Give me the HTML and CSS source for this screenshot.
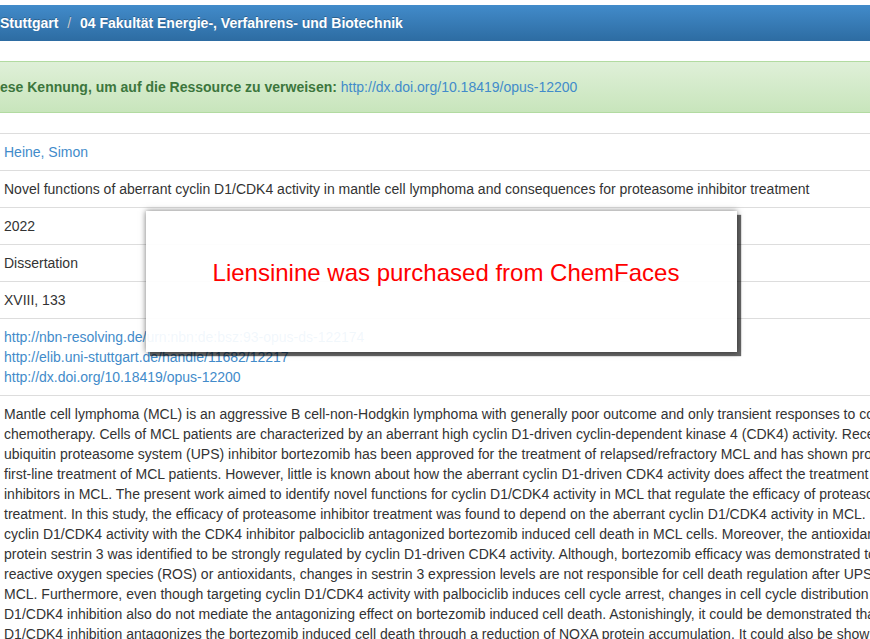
FILE: index.html
```html
<!DOCTYPE html>
<html lang="de">
<head>
    <meta charset="UTF-8">
    <meta name="viewport" content="width=device-width, initial-scale=1.0">
    <title>Novel functions of aberrant cyclin D1/CDK4 activity</title>
    <link rel="stylesheet" href="styles.css">
</head>
<body>

<ol class="breadcrumb">
    <li>Stuttgart</li>
    <li>04 Fakultät Energie-, Verfahrens- und Biotechnik</li>
</ol>

<div class="alert-success">
    ese Kennung, um auf die Ressource zu verweisen: <a href="#">http://dx.doi.org/10.18419/opus-12200</a>
</div>

<table class="item-table">
    <tr><td><a href="#">Heine, Simon</a></td></tr>
    <tr><td>Novel functions of aberrant cyclin D1/CDK4 activity in mantle cell lymphoma and consequences for proteasome inhibitor treatment</td></tr>
    <tr><td>2022</td></tr>
    <tr><td>Dissertation</td></tr>
    <tr><td>XVIII, 133</td></tr>
    <tr>
        <td>
            <a href="#">http://nbn-resolving.de/urn:nbn:de:bsz:93-opus-ds-122174</a><br>
            <a href="#">http://elib.uni-stuttgart.de/handle/11682/12217</a><br>
            <a href="#">http://dx.doi.org/10.18419/opus-12200</a>
        </td>
    </tr>
    <tr>
        <td class="abstract">Mantle cell lymphoma (MCL) is an aggressive B cell-non-Hodgkin lymphoma with generally poor outcome and only transient responses to conventional<br>chemotherapy. Cells of MCL patients are characterized by an aberrant high cyclin D1-driven cyclin-dependent kinase 4 (CDK4) activity. Recently, the<br>ubiquitin proteasome system (UPS) inhibitor bortezomib has been approved for the treatment of relapsed/refractory MCL and has shown promising results in<br>first-line treatment of MCL patients. However, little is known about how the aberrant cyclin D1-driven CDK4 activity does affect the treatment with proteasome<br>inhibitors in MCL. The present work aimed to identify novel functions for cyclin D1/CDK4 activity in MCL that regulate the efficacy of proteasome inhibitor<br>treatment. In this study, the efficacy of proteasome inhibitor treatment was found to depend on the aberrant cyclin D1/CDK4 activity in MCL. Inhibition of<br>cyclin D1/CDK4 activity with the CDK4 inhibitor palbociclib antagonized bortezomib induced cell death in MCL cells. Moreover, the antioxidant<br>protein sestrin 3 was identified to be strongly regulated by cyclin D1-driven CDK4 activity. Although, bortezomib efficacy was demonstrated to depend on<br>reactive oxygen species (ROS) or antioxidants, changes in sestrin 3 expression levels are not responsible for cell death regulation after UPS inhibition in<br>MCL. Furthermore, even though targeting cyclin D1/CDK4 activity with palbociclib induces cell cycle arrest, changes in cell cycle distribution after cyclin<br>D1/CDK4 inhibition also do not mediate the antagonizing effect on bortezomib induced cell death. Astonishingly, it could be demonstrated that cyclin<br>D1/CDK4 inhibition antagonizes the bortezomib induced cell death through a reduction of NOXA protein accumulation. It could also be shown that</td>
    </tr>
</table>

<div class="notice">Liensinine was purchased from ChemFaces</div>

</body>
</html>
```

FILE: styles.css
```css
html, body {
    overflow: hidden;
}
body {
    margin: 0;
    padding-top: 5px;
    font-family: "Liberation Sans", Arial, sans-serif;
    font-size: 14px;
    line-height: 20px;
    color: #333;
    background: #fff;
}
a {
    color: #428bca;
    text-decoration: none;
}
.breadcrumb {
    list-style: none;
    margin: 0 0 20px;
    padding: 8px 0;
    background: linear-gradient(#428bca, #2d6ca2);
    color: #fff;
    font-weight: bold;
    text-shadow: 0 -1px 0 rgba(0, 0, 0, 0.25);
    white-space: nowrap;
}
.breadcrumb li {
    display: inline-block;
}
.breadcrumb li + li:before {
    content: "/\00a0";
    padding: 0 5px;
    color: #ccc;
    font-weight: normal;
}
.alert-success {
    margin-bottom: 20px;
    padding: 15px 0;
    border-top: 1px solid #b2dba1;
    border-bottom: 1px solid #b2dba1;
    background: linear-gradient(#dff0d8, #c8e5bc);
    color: #3c763d;
    font-weight: bold;
    white-space: nowrap;
}
.alert-success a {
    font-weight: normal;
}
.item-table {
    width: 100%;
    border-collapse: collapse;
}
.item-table td {
    padding: 8px 4px;
    border-top: 1px solid #ddd;
    vertical-align: top;
    white-space: nowrap;
}
.notice {
    position: absolute;
    left: 146px;
    top: 211px;
    width: 582px;
    height: 93px;
    padding: 48px 0 0 9px;
    background: rgba(255, 255, 255, 0.93);
    box-shadow: 4px 4px 1px rgba(0, 0, 0, 0.6), 0 0 6px rgba(0, 0, 0, 0.55);
    color: #f00;
    font-size: 24px;
    line-height: normal;
    text-align: center;
}
```
